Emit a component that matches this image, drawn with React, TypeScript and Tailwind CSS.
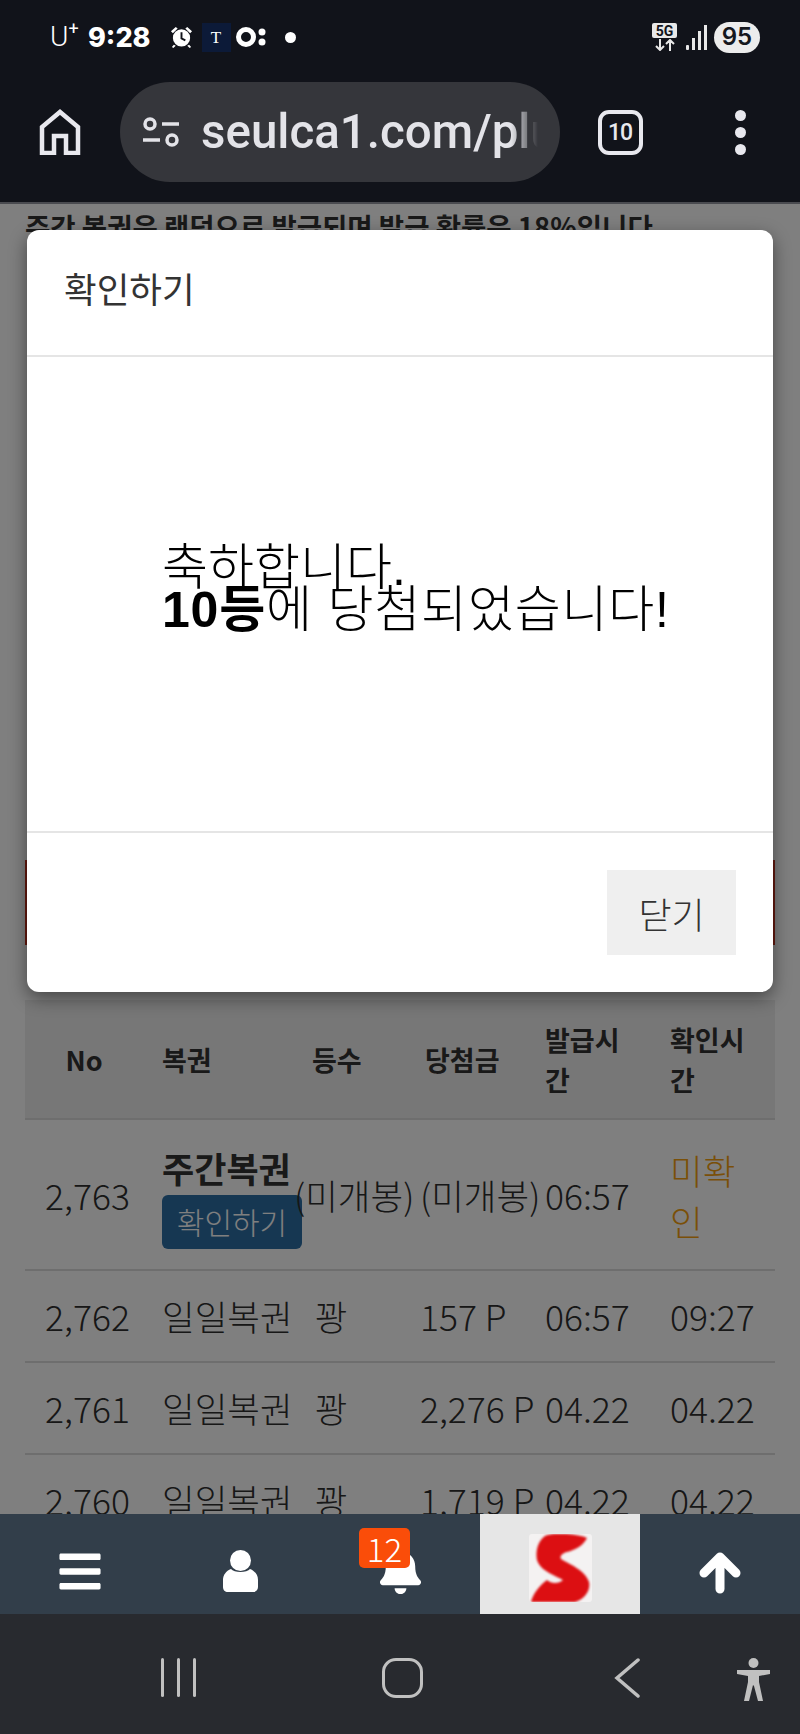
import { FaBars, FaBell } from "react-icons/fa";

const rows = [
  { no: "2,762", prize: "157 P", issued: "06:57", checked: "09:27" },
  { no: "2,761", prize: "2,276 P", issued: "04.22", checked: "04.22" },
  { no: "2,760", prize: "1,719 P", issued: "04.22", checked: "04.22" },
];

function StatusBar() {
  return (
    <div className="flex h-[72px] items-center justify-between pl-[50px] pr-[40px] pt-[2px] text-white">
      <div className="flex items-center">
        <span className="flex w-[38px] items-start font-['Roboto',sans-serif] text-[28px] font-light leading-none">
          U<span className="-mt-[3px] text-[18px] font-normal">+</span>
        </span>
        <span className="font-['Inter',sans-serif] text-[27px] font-extrabold leading-none">9:28</span>
        <svg className="ml-[19px] h-[24px] w-[23px]" viewBox="0 0 24 24" fill="#fff">
          <circle cx="12" cy="13" r="9" />
          <path d="M1 6 6 1.500 8 3 3 8zM23 6 18 1.500 16 3l5 5zM4 20l-2 2.500 1.500 1L6 21zM20 20l2 2.500-1.500 1L18 21z" />
          <path d="M12 7v6.500l4 2" fill="none" stroke="#11131a" strokeWidth="2" />
        </svg>
        <span className="ml-[9px] flex h-[29px] w-[29px] items-center justify-center bg-[#0c1a38] font-['Liberation_Serif',serif] text-[17px] leading-none">
          T
        </span>
        <svg className="ml-[5px] h-[22px] w-[30px]" viewBox="0 0 30 22" fill="#fff">
          <path fillRule="evenodd" d="M10 1a10 10 0 1 0 0 20 10 10 0 0 0 0-20zm0 5a5 5 0 1 1 0 10 5 5 0 0 1 0-10z" />
          <circle cx="26" cy="6" r="3.500" />
          <circle cx="26" cy="16" r="3.500" />
        </svg>
        <span className="ml-[19px] h-[11px] w-[11px] rounded-full bg-white" />
      </div>
      <div className="flex items-center">
        <div className="flex w-[25px] flex-col items-center">
          <span className="flex h-[15px] w-[25px] items-center justify-center rounded-[2px] bg-[#e8e8e8] font-['Roboto',sans-serif] text-[14px] font-bold leading-none text-[#11131a]">
            5G
          </span>
          <svg className="mt-[1px] h-[12px] w-[20px]" viewBox="0 0 20 12" fill="none" stroke="#e8e8e8" strokeWidth="2">
            <path d="M5 0v11M1 7l4 4 4-4M15 12V1M11 5l4-4 4 4" />
          </svg>
        </div>
        <div className="ml-[9px] flex h-[26px] items-end gap-[3px]">
          <span className="h-[5px] w-[3px] rounded-[1px] bg-[#e8e8e8]" />
          <span className="h-[12px] w-[3px] bg-[#e8e8e8]" />
          <span className="h-[19px] w-[3px] bg-[#e8e8e8]" />
          <span className="h-[25px] w-[3px] bg-[#e8e8e8]" />
        </div>
        <span className="ml-[7px] flex h-[31px] w-[46px] items-center justify-center rounded-full bg-[#ececec] font-['Inter',sans-serif] text-[24px] font-semibold leading-none text-[#15171d]">
          95
        </span>
      </div>
    </div>
  );
}

function BrowserBar() {
  return (
    <div className="flex h-[132px] items-start border-b-[2px] border-[#4a4b50] pt-[10px]">
      <div className="flex h-[100px] w-[120px] items-center justify-center">
        <svg className="h-[46px] w-[42px]" viewBox="0 0 42 46" fill="none" stroke="#e8e8ee" strokeWidth="4.500">
          <path d="M3 44V18L21 3l18 15v26H27V27H15v17z" />
        </svg>
      </div>
      <div className="flex h-[100px] w-[440px] items-center rounded-full bg-[#35363b] pl-[22px]">
        <svg className="h-[30px] w-[38px] shrink-0" viewBox="0 0 38 30" fill="none" stroke="#e3e3e8" strokeWidth="3.500">
          <circle cx="8" cy="7" r="5" />
          <path d="M20 7h17M1 23h17" />
          <circle cx="30" cy="23" r="5" />
        </svg>
        <div className="ml-[21px] w-[337px] overflow-hidden whitespace-nowrap font-['Roboto',sans-serif] text-[47.500px] font-medium leading-[60px] text-[#e3e3e8] [mask-image:linear-gradient(to_right,black_92%,transparent)]">
          seulca1.com/plus
        </div>
      </div>
      <div className="flex h-[100px] w-[120px] items-center justify-center">
        <span className="flex h-[45px] w-[45px] items-center justify-center rounded-[11px] border-[4px] border-[#e8e8ee] font-['Roboto',sans-serif] text-[23px] font-medium leading-none tracking-[-1px] text-[#e8e8ee]">
          10
        </span>
      </div>
      <div className="flex h-[100px] flex-1 flex-col items-center justify-center gap-[6px]">
        <span className="h-[11px] w-[11px] rounded-full bg-[#e8e8ee]" />
        <span className="h-[11px] w-[11px] rounded-full bg-[#e8e8ee]" />
        <span className="h-[11px] w-[11px] rounded-full bg-[#e8e8ee]" />
      </div>
    </div>
  );
}

function LotteryTable() {
  return (
    <table className="mt-[55px] w-[750px] table-fixed text-left text-[35.500px] font-light text-[#2e2e2e]">
      <colgroup>
        <col className="w-[137px]" />
        <col className="w-[150px]" />
        <col className="w-[108px]" />
        <col className="w-[125px]" />
        <col className="w-[125px]" />
        <col className="w-[105px]" />
      </colgroup>
      <thead>
        <tr className="h-[119px] border-b-[2px] border-[#dcdcdc] bg-[#eeeeee] text-[27px] font-bold leading-[40px] text-[#333333]">
          <th className="pr-[19px] pt-[2px] text-center">No</th>
          <th className="pt-[2px]">복권</th>
          <th className="pt-[2px]">등수</th>
          <th className="pl-[5px] pt-[2px]">당첨금</th>
          <th className="pt-[2px]">
            발급시
            <br />간
          </th>
          <th className="pt-[2px]">
            확인시
            <br />간
          </th>
        </tr>
      </thead>
      <tbody>
        <tr className="h-[151px] border-b-[2px] border-[#dcdcdc]">
          <td className="pr-[12px] text-center">2,763</td>
          <td className="pt-[5px]">
            <div className="whitespace-nowrap text-[35px] font-bold leading-[44px] text-[#333333]">주간복권</div>
            <span className="mt-[5px] flex h-[54px] w-[140px] items-center justify-center rounded-[6px] bg-[#2c6ea5] text-[30px] font-light text-white">
              확인하기
            </span>
          </td>
          <td className="whitespace-nowrap">
            <span className="-ml-[18px]">(미개봉)</span>
          </td>
          <td className="whitespace-nowrap">(미개봉)</td>
          <td>06:57</td>
          <td className="leading-[51px] text-[#f5a010]">
            미확
            <br />인
          </td>
        </tr>
        {rows.map((row) => (
          <tr key={row.no} className="h-[92px] border-b-[2px] border-[#dcdcdc]">
            <td className="pr-[12px] text-center">{row.no}</td>
            <td className="whitespace-nowrap">일일복권</td>
            <td className="pl-[3px]">꽝</td>
            <td className="whitespace-nowrap">{row.prize}</td>
            <td>{row.issued}</td>
            <td>{row.checked}</td>
          </tr>
        ))}
      </tbody>
    </table>
  );
}

function ResultModal() {
  return (
    <div className="absolute left-[27px] top-[26px] flex h-[762px] w-[746px] flex-col rounded-[12px] bg-white shadow-[0_6px_18px_rgba(0,0,0,0.45)]">
      <div className="flex h-[127px] items-center border-b-[2px] border-[#e5e5e5] pb-[9px] pl-[37px] text-[35.500px] font-normal text-[#333333]">
        확인하기
      </div>
      <div className="flex flex-1 items-center pb-[10px] pl-[135px] font-['Liberation_Sans','Noto_Sans_CJK_KR',sans-serif] text-[50px] font-light leading-[42px] text-black">
        <div>
          축하합니다.
          <br />
          <span className="tracking-[0.8px]">
            <b className="font-bold">10등</b>에 당첨되었습니다!
          </span>
        </div>
      </div>
      <div className="flex h-[161px] items-center justify-end border-t-[2px] border-[#e5e5e5] pr-[37px]">
        <button type="button" className="h-[85px] w-[129px] bg-[#efefef] text-[36px] font-light text-[#333333]">
          닫기
        </button>
      </div>
    </div>
  );
}

function BottomNav() {
  return (
    <div className="grid h-[100px] grid-cols-5 bg-[#323e4a] text-white">
      <div className="flex items-center justify-center pr-[1px] pt-[14px]">
        <FaBars className="h-[47px] w-[42px]" />
      </div>
      <div className="flex items-center justify-center pt-[14px]">
        <svg className="h-[42px] w-[35px]" viewBox="0 0 35 42" fill="#fff">
          <ellipse cx="17.500" cy="10.500" rx="10.500" ry="10.500" />
          <path d="M8 19c3 4 16 4 19 0 5 2 8 6 8 11v7c0 3-2 5-5 5H5c-3 0-5-2-5-5v-7c0-5 3-9 8-11z" />
        </svg>
      </div>
      <div className="relative flex items-center justify-center pt-[13px]">
        <FaBell className="h-[47px] w-[47px]" />
        <span className="absolute left-[39px] top-[14px] flex h-[40px] w-[51px] items-center justify-center rounded-[5px] bg-[#fa4d09] text-[33px] font-light leading-none">
          12
        </span>
      </div>
      <div className="flex items-center justify-center bg-[#e6e6e6] pl-[1px] pt-[8px]">
        <div className="h-[68px] w-[63px] overflow-hidden rounded-[3px] bg-[#f4f2f2]">
          <svg className="h-[68px] w-[63px] blur-[1.200px]" viewBox="0 0 63 68" fill="#dc0f12">
            <path d="M16 2C24-2 50 0 58 4 54 12 46 16 38 18 34 19 30 22 32 25 40 30 56 36 60 48 62 58 54 66 46 68H2C4 60 10 52 18 46 22 50 30 50 34 46 28 42 12 38 8 26 6 16 10 6 16 2Z" />
          </svg>
        </div>
      </div>
      <div className="flex items-center justify-center pt-[18px]">
        <svg className="h-[42px] w-[42px]" viewBox="0 0 42 42" fill="none" stroke="#fff" strokeWidth="9" strokeLinecap="round" strokeLinejoin="round">
          <path d="M21 37V6M5 21 21 5l16 16" />
        </svg>
      </div>
    </div>
  );
}

function SystemNav() {
  return (
    <div className="relative flex h-[120px] items-start bg-[#282a2f] pt-[44px]">
      <div className="ml-[161px] flex h-[39px] w-[35px] justify-between">
        <span className="h-full w-[3px] rounded-full bg-[#c0c0c0]" />
        <span className="h-full w-[3px] rounded-full bg-[#c0c0c0]" />
        <span className="h-full w-[3px] rounded-full bg-[#c0c0c0]" />
      </div>
      <span className="ml-[186px] h-[40px] w-[41px] rounded-[14px] border-[3.500px] border-[#c0c0c0]" />
      <svg className="ml-[191px] h-[40px] w-[26px]" viewBox="0 0 26 40" fill="none" stroke="#c0c0c0" strokeWidth="3.500" strokeLinecap="round">
        <path d="M24 2 3 20l21 18" />
      </svg>
      <svg className="ml-[96px] h-[44px] w-[35px]" viewBox="0 0 35 44" fill="#c0c0c0">
        <circle cx="17.500" cy="5" r="5" />
        <path d="M1 12h33v4l-11 2v6l4 19h-5l-4-15-1-1-4 16H8l4-19v-6L1 16z" />
      </svg>
    </div>
  );
}

export default function App() {
  return (
    <div className="flex h-[1734px] w-[800px] flex-col overflow-hidden bg-[#11131a] font-['Noto_Sans_CJK_KR',sans-serif]">
      <StatusBar />
      <BrowserBar />
      <div className="relative min-h-0 flex-1 overflow-hidden bg-white">
        <div className="px-[25px] pt-[2px]">
          <p className="h-[40px] whitespace-nowrap text-[27.500px] font-bold leading-[40px] text-[#333333]">
            주간 복권은 랜덤으로 발급되며 발급 확률은 18%입니다.
          </p>
          <div className="mt-[614px] h-[85px] bg-[#c8321e]" />
          <LotteryTable />
        </div>
        <div className="absolute inset-0 bg-black/50" />
        <ResultModal />
      </div>
      <BottomNav />
      <SystemNav />
    </div>
  );
}
